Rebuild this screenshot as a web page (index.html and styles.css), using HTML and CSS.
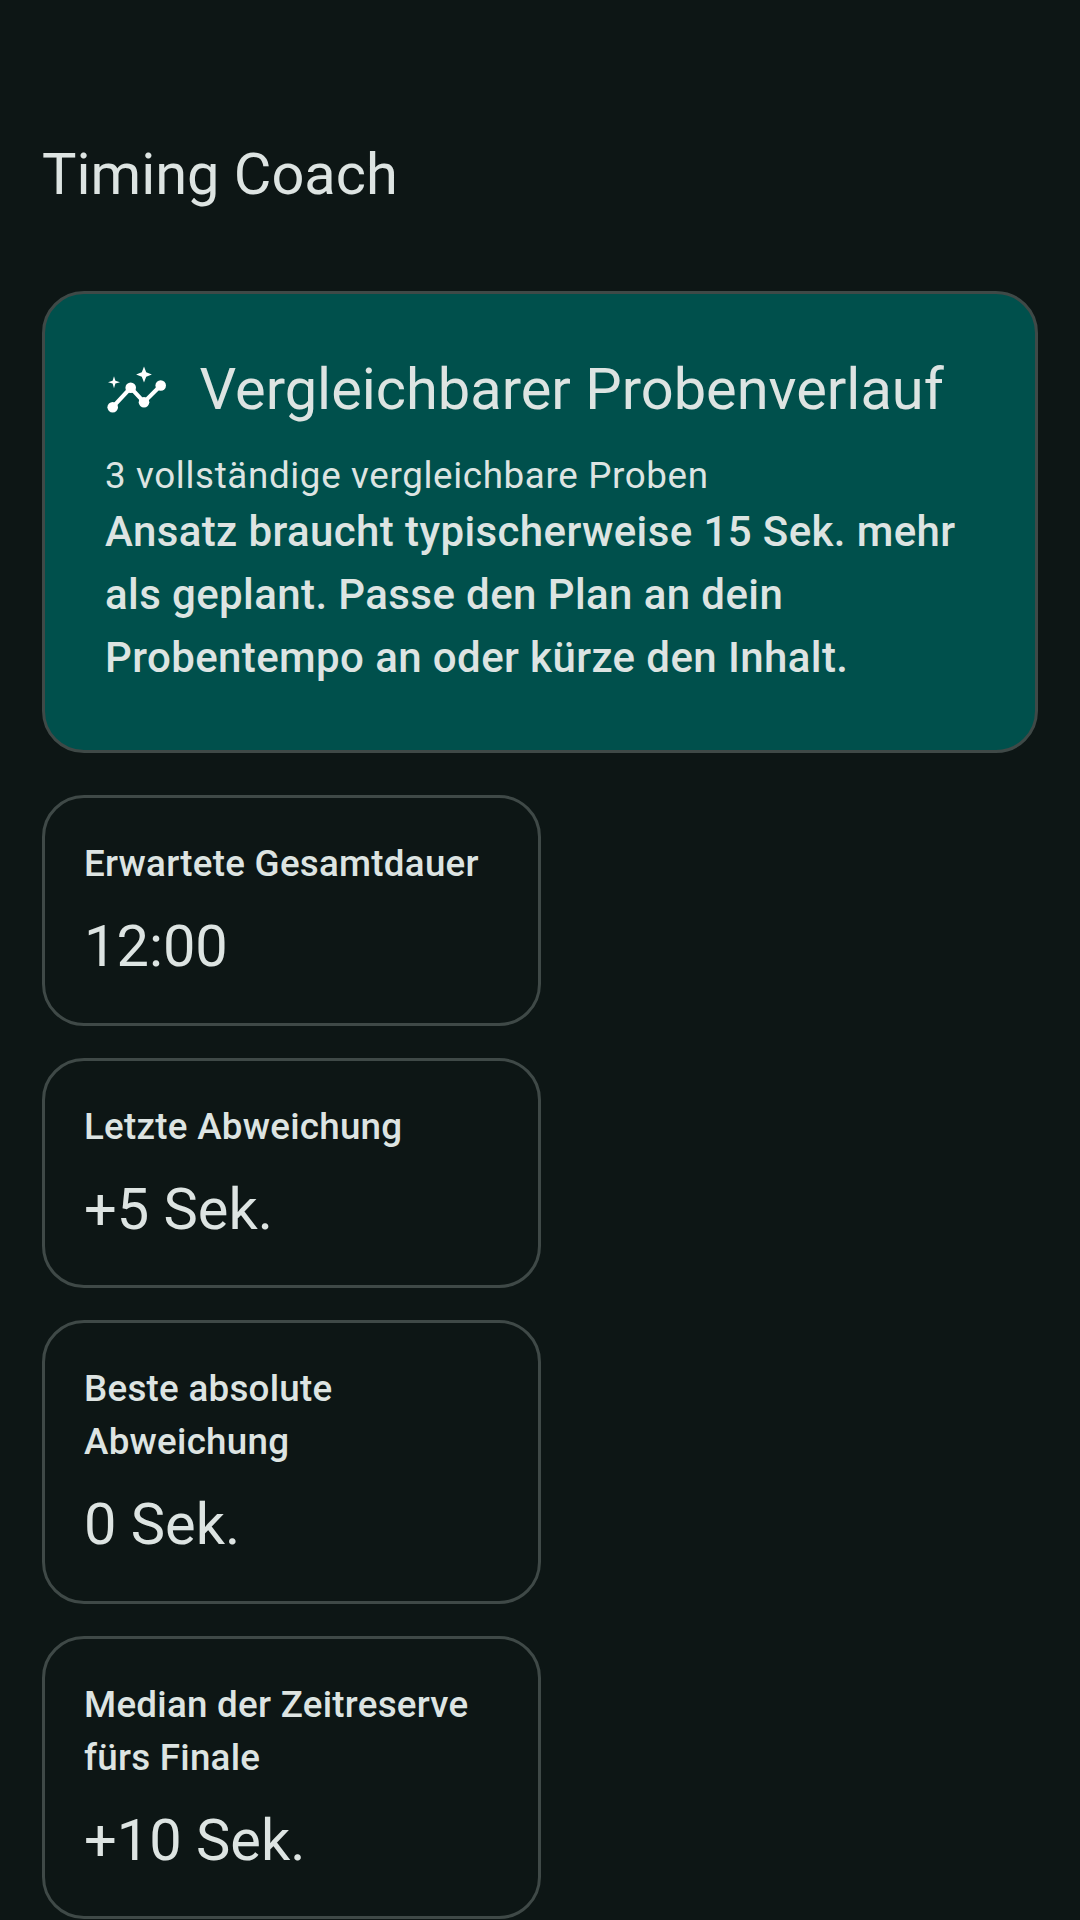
FILE: index.html
```html
<!DOCTYPE html>
<html lang="de">
<head>
<meta charset="utf-8">
<title>Timing Coach</title>
<link rel="stylesheet" href="styles.css">
</head>
<body>
<main class="screen">
  <h1 class="app-title">Timing Coach</h1>
  <section class="hero">
    <div class="hero-head">
      <svg class="hero-icon" viewBox="0 0 63 63" aria-hidden="true">
        <path d="M39 9.6l2.2 5.7 5.7 2.2-5.7 2.2L39 25.4l-2.2-5.7-5.7-2.2 5.7-2.2z"/>
        <path d="M9 19.2l1.4 4.6 4.6 1.4-4.6 1.4L9 31.2l-1.4-4.6L3 25.2l4.6-1.4z"/>
        <path class="line" d="M7.7 50.2L25.7 30.8 39 45.2 55.7 28.5"/>
        <circle cx="7.7" cy="50.2" r="5.3"/>
        <circle cx="25.7" cy="30.8" r="5.3"/>
        <circle cx="39" cy="45.2" r="5.3"/>
        <circle cx="55.7" cy="28.5" r="5.3"/>
      </svg>
      <h2 class="hero-title">Vergleichbarer Probenverlauf</h2>
    </div>
    <p class="hero-sub">3 vollständige vergleichbare Proben</p>
    <p class="hero-body">Ansatz braucht typischerweise 15 Sek. mehr als geplant. Passe den Plan an dein Probentempo an oder kürze den Inhalt.</p>
  </section>
  <div class="stats">
    <article class="stat"><div class="stat-label">Erwartete Gesamtdauer</div><div class="stat-value">12:00</div></article>
    <article class="stat"><div class="stat-label">Letzte Abweichung</div><div class="stat-value">+5 Sek.</div></article>
    <article class="stat"><div class="stat-label">Beste absolute Abweichung</div><div class="stat-value">0 Sek.</div></article>
    <article class="stat"><div class="stat-label">Median der Zeitreserve fürs Finale</div><div class="stat-value">+10 Sek.</div></article>
  </div>
</main>
</body>
</html>
```
FILE: styles.css
```css
* { box-sizing: border-box; }
html, body { margin: 0; padding: 0; }
body {
  width: 1080px;
  height: 1920px;
  overflow: hidden;
  background: #0d1615;
  color: #dde4e2;
  font-family: Roboto, "Noto Sans", sans-serif;
}
.screen { padding: 139px 42px 0; }
.app-title {
  margin: 0 0 82px;
  font-size: 57.75px;
  line-height: 70px;
  font-weight: 400;
}
.hero {
  height: 462px;
  padding: 59.5px 60px 0;
  background: #00504c;
  border: 3px solid #3f4947;
  border-radius: 42px;
}
.hero-head { display: flex; align-items: center; gap: 31.5px; }
.hero-icon { width: 63px; height: 63px; flex: none; fill: #fff; }
.hero-icon .line { fill: none; stroke: #fff; stroke-width: 4; }
.hero-title {
  margin: 0;
  font-size: 57.75px;
  line-height: 70px;
  font-weight: 400;
  white-space: nowrap;
}
.hero-sub {
  margin: 28px 0 0;
  font-size: 36.75px;
  line-height: 47px;
  letter-spacing: 0.65px;
}
.hero-body {
  margin: 1px 0 0;
  font-size: 42px;
  line-height: 63px;
  font-weight: 500;
  letter-spacing: 0.4px;
}
.stats { display: flex; flex-direction: column; gap: 32px; margin-top: 42px; width: 499px; }
.stat {
  padding: 39px 39px 39.5px;
  border: 3px solid #3f4947;
  border-radius: 42px;
}
.stat-label {
  font-size: 36.75px;
  line-height: 53px;
  font-weight: 500;
  letter-spacing: 0.26px;
}
.stat-value {
  margin-top: 19px;
  font-size: 57.75px;
  line-height: 74px;
}
```
